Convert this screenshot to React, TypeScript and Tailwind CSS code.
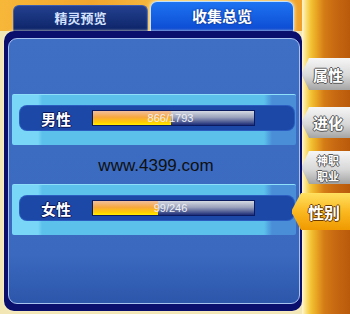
import { FC } from "react";

const cjk = "font-['Noto_Sans_CJK_SC','Noto_Sans',sans-serif] font-bold";

interface StatRowProps {
  label: string;
  value: number;
  total: number;
}

const StatRow: FC<StatRowProps> = ({ label, value, total }) => {
  const pct = (value / total) * 100;
  return (
    <div className="mx-[3px] h-[51px] rounded-[2px] border-t border-[#8ee0fa] bg-[linear-gradient(90deg,#7ad6f6_0px,#7ad6f6_26px,#5cc2ec_30px,#5cc2ec_252px,#4a8ed8_260px,#4a8ed8_100%)] pt-[11px] pl-[8px] pr-[2px]">
      <div className="flex h-[24px] items-center rounded-[7px] bg-[#1c48a8] shadow-[0_0_0_1px_#2b5cc0]">
        <div
          className={`w-[72px] text-center text-[15px] leading-none text-white ${cjk} [text-shadow:1px_0_#0a1658,-1px_0_#0a1658,0_1px_#0a1658,0_-1px_#0a1658]`}
        >
          {label}
        </div>
        <div className="relative h-[16px] w-[163px] overflow-hidden border border-[#0c1a60] bg-[linear-gradient(180deg,#d6dae2,#9aa2bc_45%,#1c2c78)]">
          <div
            className="h-full bg-[linear-gradient(180deg,#f2bf9c,#f7a83c_45%,#ffcc00_80%,#fff000)]"
            style={{ width: `${pct}%` }}
          />
          <div className="absolute inset-0 flex items-center justify-center pr-[6px] font-['Liberation_Sans',Arial,sans-serif] text-[11px] leading-none text-[#eef0f4]">
            {value}/{total}
          </div>
        </div>
      </div>
    </div>
  );
};

interface SideTabProps {
  lines: string[];
  className: string;
}

const SideTab: FC<SideTabProps> = ({ lines, className }) => (
  <div
    className={`flex w-[48px] flex-col items-center justify-center bg-[linear-gradient(180deg,#f6f6f6,#d8d8d8_55%,#a4a4a4)] pl-[4px] [clip-path:polygon(7px_0,100%_0,100%_100%,7px_100%,0_55%,0_45%)] ${className}`}
  >
    {lines.map((l) => (
      <span
        key={l}
        className={`${cjk} text-white ${lines.length > 1 ? "text-[11px] leading-[16px]" : "text-[15px] leading-none"} [text-shadow:1px_0_#555,-1px_0_#555,0_1px_#555,0_-1px_#555]`}
      >
        {l}
      </span>
    ))}
  </div>
);

export default function App() {
  return (
    <div className="flex h-[314px] w-[350px] overflow-hidden bg-[#f2e6b4]">
      <div className="flex w-[302px] flex-col">
        <div className="flex h-[31px] items-end gap-[2px] bg-[linear-gradient(100deg,#f7b83a,#f2a52c_30%,#f6c048_60%,#f0a02a)] pl-[13px]">
          <div
            className={`flex h-[26px] w-[135px] items-center justify-center rounded-t-[6px] border border-b-0 border-[#3c5cb0] bg-[linear-gradient(180deg,#24408e,#0c2468)] pb-[2px] text-[13px] leading-none text-[#d4e2ff] ${cjk}`}
          >
            精灵预览
          </div>
          <div
            className={`flex h-[30px] w-[144px] items-center justify-center rounded-t-[7px] border border-b-0 border-[#bfe0ff] bg-[linear-gradient(180deg,#1e74f2,#0c4ad2)] pb-[3px] text-[15px] leading-none text-white shadow-[0_0_4px_#fff8d0] ${cjk} [text-shadow:0_0_2px_#06206a]`}
          >
            收集总览
          </div>
        </div>
        <div className="ml-[4px] flex h-[280px] w-[298px] flex-col rounded-[10px] bg-[#0a0e6c] pt-[7px] pr-[2px] pb-[7px] pl-[4px] shadow-[0_0_3px_#fff6d8]">
          <div className="flex flex-1 flex-col rounded-[9px] border border-[#a8c2f0] bg-[linear-gradient(180deg,#3e6fc5,#3a69bf_82%,#2c56aa)] pt-[55px]">
            <StatRow label="男性" value={866} total={1793} />
            <div className="flex h-[39px] items-center justify-center pl-[4px] pt-[2px] font-['Liberation_Sans',Arial,sans-serif] text-[17px] leading-none text-[#101010]">
              www.4399.com
            </div>
            <StatRow label="女性" value={99} total={246} />
          </div>
        </div>
      </div>
      <div className="flex w-[48px] flex-col bg-[linear-gradient(90deg,#fff6d4_0px,#fae07a_4px,#f2c232_9px,#e8a222_15px,#d47c16_22px,#c86a12_32px,#b85a0a_48px)] pt-[58px]">
        <SideTab lines={["属性"]} className="h-[32px]" />
        <SideTab lines={["进化"]} className="mt-[17px] h-[31px]" />
        <SideTab lines={["神职", "职业"]} className="mt-[13px] h-[33px]" />
        <div
          className={`-ml-[10px] mt-[9px] flex h-[37px] w-[58px] items-center justify-center bg-[linear-gradient(180deg,#ffe060,#fbb820_50%,#ef9a00)] pl-[6px] text-[16px] leading-none text-white ${cjk} [clip-path:polygon(9px_0,100%_0,100%_100%,9px_100%,0_55%,0_45%)] [text-shadow:1px_0_#6a3a00,-1px_0_#6a3a00,0_1px_#6a3a00,0_-1px_#6a3a00]`}
        >
          性别
        </div>
      </div>
    </div>
  );
}
